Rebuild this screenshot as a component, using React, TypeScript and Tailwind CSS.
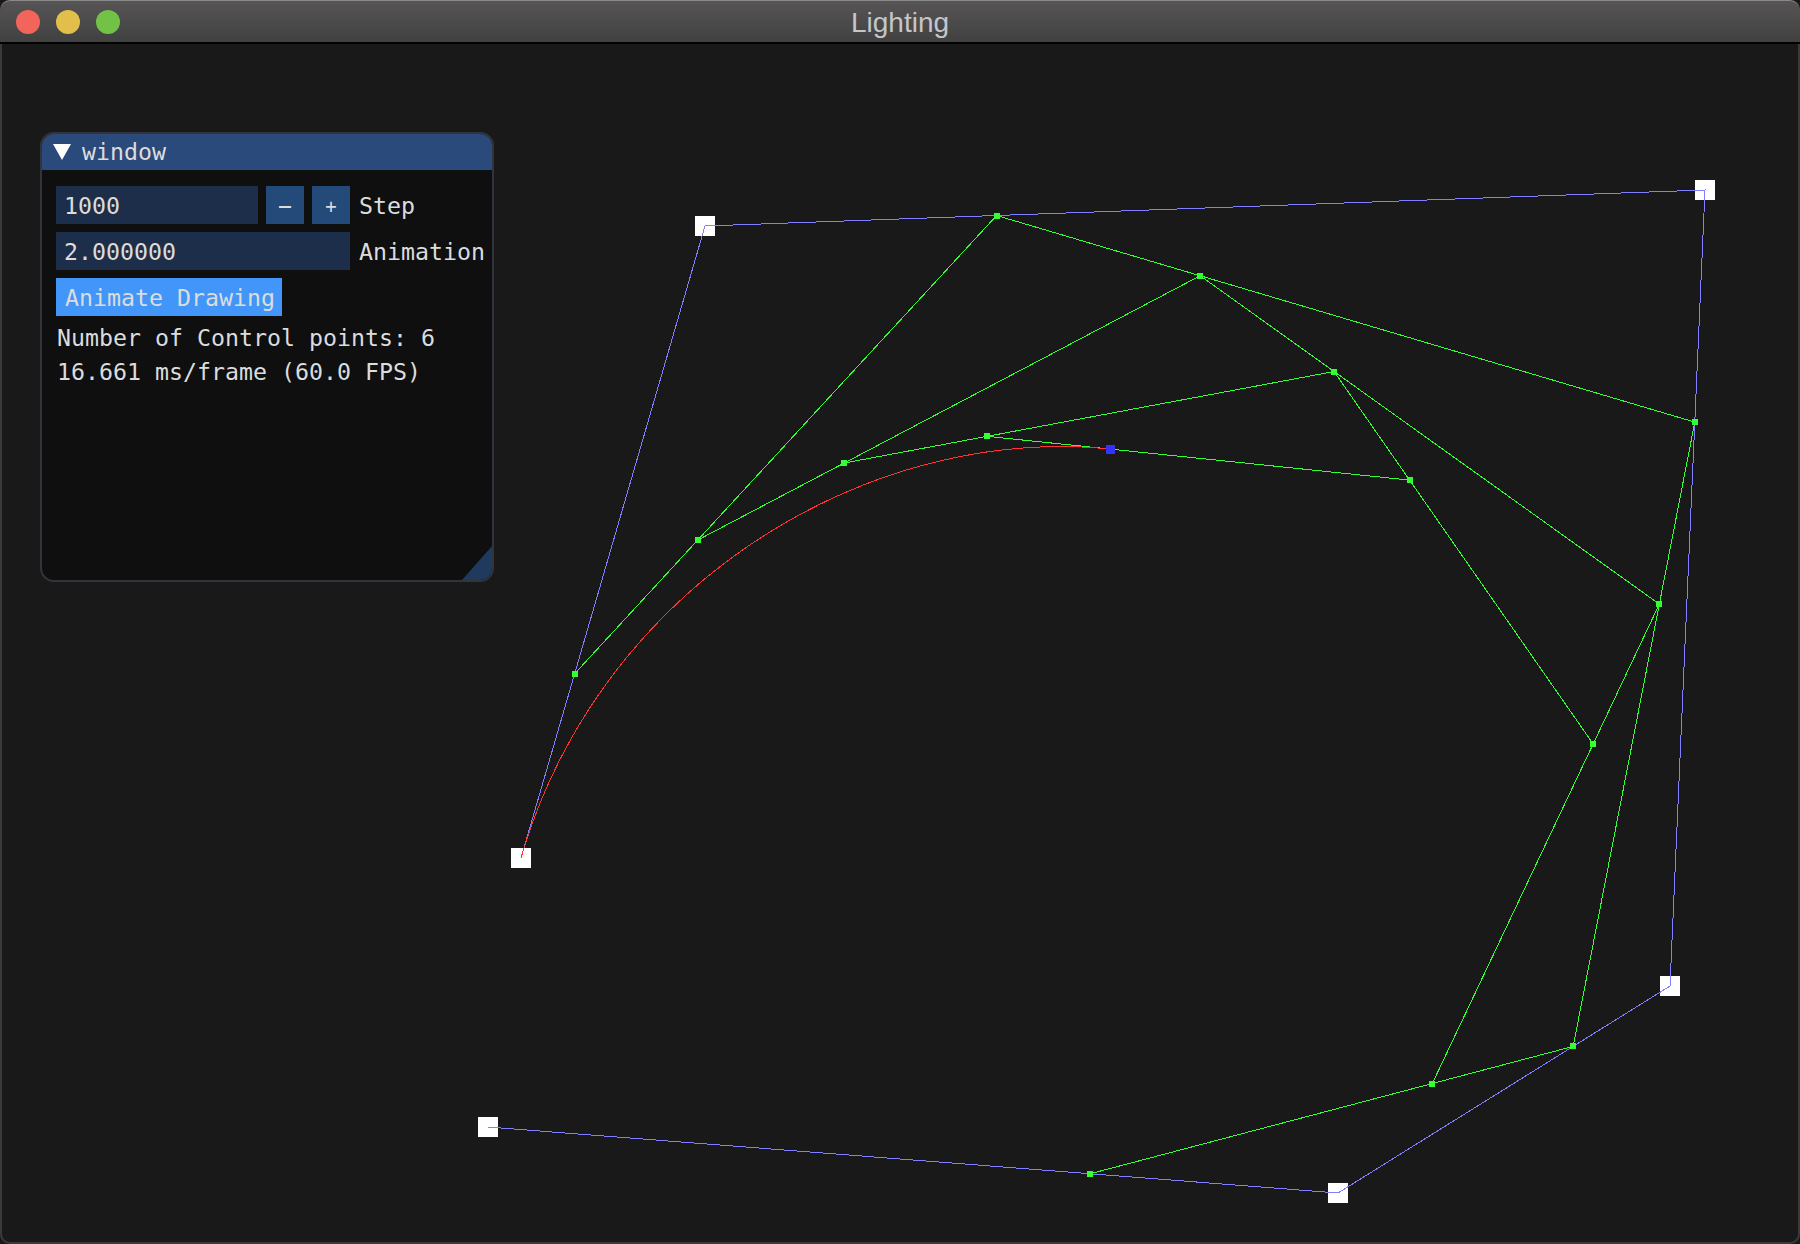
const P: [number, number][] = [
  [521, 858],
  [705, 226],
  [1705, 190],
  [1670, 986],
  [1338, 1193],
  [488, 1127],
];
const T = 0.2916;

function lerp(a: [number, number], b: [number, number], t: number): [number, number] {
  return [a[0] + (b[0] - a[0]) * t, a[1] + (b[1] - a[1]) * t];
}

function levels(pts: [number, number][], t: number) {
  const out: [number, number][][] = [pts];
  let cur = pts;
  while (cur.length > 1) {
    const next: [number, number][] = [];
    for (let i = 0; i < cur.length - 1; i++) next.push(lerp(cur[i], cur[i + 1], t));
    out.push(next);
    cur = next;
  }
  return out;
}

const lv = levels(P, T);
const curve: string[] = [];
for (let i = 0; i <= 200; i++) {
  const l = levels(P, (T * i) / 200);
  const p = l[l.length - 1][0];
  curve.push(`${p[0].toFixed(1)},${p[1].toFixed(1)}`);
}
const mid = lv.slice(1, lv.length - 1);
const end = lv[lv.length - 1][0];

function Canvas() {
  return (
    <svg className="absolute left-0 top-0 w-[1800px] h-[1244px]" viewBox="0 0 1800 1244" shapeRendering="crispEdges" fill="none">
      {P.map((p, i) => (
        <rect key={i} x={p[0] - 10} y={p[1] - 10} width={20} height={20} fill="#ffffff" />
      ))}
      <polyline points={P.map((p) => p.join(",")).join(" ")} stroke="#7f7fff" strokeWidth={1} />
      {mid.map((l, i) => (
        <polyline key={i} points={l.map((p) => p.join(",")).join(" ")} stroke="#33ff33" strokeWidth={1} />
      ))}
      {mid.map((l, i) =>
        l.map((p, j) => <rect key={`${i}-${j}`} x={p[0] - 3} y={p[1] - 3} width={6} height={6} fill="#33ff33" />)
      )}
      <polyline points={curve.join(" ")} stroke="#ff3333" strokeWidth={1} />
      <rect x={end[0] - 4.5} y={end[1] - 4.5} width={9} height={9} fill="#3333ff" />
    </svg>
  );
}

function Panel() {
  return (
    <div className="relative w-[454px] h-[450px] rounded-[14px] border-2 border-[#33333b] bg-[#0f0f0f] overflow-hidden text-[23.25px] leading-[40px] text-[#dcdcdc] [font-family:'DejaVu_Sans_Mono',monospace]">
      <div className="flex items-center h-[37px] -mt-[1px] bg-[#294a7a] pl-[10px] gap-[10px]">
        <svg width="20" height="18" viewBox="0 0 20 18" className="shrink-0">
          <polygon points="1,1 19,1 10,17" fill="#ffffff" />
        </svg>
        <span>window</span>
      </div>
      <div className="flex flex-col pl-[14px] pt-[16px] gap-[8px]">
        <div className="flex h-[38px]">
          <div className="w-[202px] h-[38px] bg-[#1d2e4a] pl-[8px]">1000</div>
          <div className="ml-[8px] w-[38px] h-[38px] bg-[#234a78] text-center">−</div>
          <div className="ml-[8px] w-[38px] h-[38px] bg-[#234a78] text-center text-[19px]">+</div>
          <div className="ml-[9px]">Step</div>
        </div>
        <div className="flex h-[38px]">
          <div className="w-[294px] h-[38px] bg-[#1d2e4a] pl-[8px]">2.000000</div>
          <div className="ml-[9px]">Animation</div>
        </div>
        <div className="w-[226px] h-[38px] bg-[#4296fa] pl-[9px]">Animate Drawing</div>
        <div className="flex flex-col -mt-[3px] pl-[1px] leading-[34px]">
          <div>Number of Control points: 6</div>
          <div>16.661 ms/frame (60.0 FPS)</div>
        </div>
      </div>
      <div className="absolute right-0 bottom-0 w-[30px] h-[34px] bg-[#1f3a5c] [clip-path:polygon(100%_0,100%_100%,0_100%)]" />
    </div>
  );
}

export default function App() {
  return (
    <div className="relative w-[1800px] h-[1244px] overflow-hidden bg-[#191919] flex flex-col">
      <Canvas />
      <div className="relative flex items-center h-[44px] shrink-0 rounded-t-[10px] border-t border-[#8a8a8a] border-b-2 border-b-black bg-gradient-to-b from-[#565454] to-[#424141] pl-[16px] gap-[16px]">
        <div className="w-[24px] h-[24px] rounded-full bg-[#f2655a]" />
        <div className="w-[24px] h-[24px] rounded-full bg-[#e2bf4a]" />
        <div className="w-[24px] h-[24px] rounded-full bg-[#72c247]" />
        <div className="absolute inset-0 flex items-center justify-center pt-[3px] text-[28px] text-[#c4c6c9] [font-family:'Liberation_Sans',sans-serif]">Lighting</div>
      </div>
      <div className="relative flex-1 pl-[38px] pt-[88px] border-x-2 border-b-2 border-[#3a3a3a] rounded-b-[10px]">
        <Panel />
      </div>
    </div>
  );
}
